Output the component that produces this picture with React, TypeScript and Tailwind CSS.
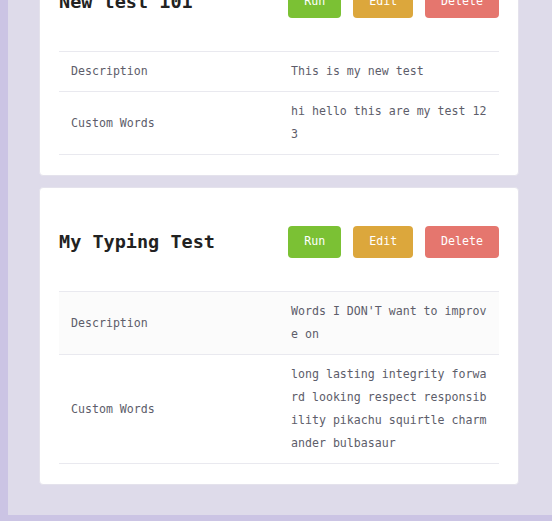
import React from "react";

type Row = { label: string; value: string; shade?: boolean };
type Test = { title: string; rows: Row[] };

const tests: Test[] = [
  {
    title: "New test 101",
    rows: [
      { label: "Description", value: "This is my new test" },
      { label: "Custom Words", value: "hi hello this are my test 123" },
    ],
  },
  {
    title: "My Typing Test",
    rows: [
      { label: "Description", value: "Words I DON'T want to improve on", shade: true },
      {
        label: "Custom Words",
        value:
          "long lasting integrity forward looking respect responsibility pikachu squirtle charmander bulbasaur",
      },
    ],
  },
];

const mono = { fontFamily: '"DejaVu Sans Mono", "Liberation Mono", monospace' };

function Card({ t }: { t: Test }) {
  return (
    <div className="bg-white rounded-[4px] border border-[#e4e2ec] px-[19px] pt-[20px] pb-[20px]">
      <div className="flex items-center justify-between h-[68px]">
        <h2 className="text-[18.5px] font-bold text-[#222222] leading-none">{t.title}</h2>
        <div className="flex gap-[12px]">
          <button className="h-[32px] px-[16px] rounded-[4px] bg-[#7bc134] text-white text-[11.6px]">Run</button>
          <button className="h-[32px] px-[16px] rounded-[4px] bg-[#dca73c] text-white text-[11.6px]">Edit</button>
          <button className="h-[32px] px-[16px] rounded-[4px] bg-[#e5766e] text-white text-[11.6px]">Delete</button>
        </div>
      </div>
      <div className="mt-[15px] border-t border-[#e9e9ef]">
        {t.rows.map((r) => (
          <div
            key={r.label}
            className={`grid grid-cols-2 border-b border-[#e9e9ef] ${r.shade ? "bg-[#fbfbfb]" : "bg-white"}`}
          >
            <div className="px-[12px] py-[8px] leading-[23px] text-[11.6px] text-[#5d5d6a] flex items-center">
              {r.label}
            </div>
            <div className="px-[12px] py-[8px] leading-[23px] text-[11.6px] text-[#5d5d6a] break-all">
              {r.value}
            </div>
          </div>
        ))}
      </div>
    </div>
  );
}

export default function App() {
  return (
    <div className="w-[552px] h-[521px] bg-[#cbc4e4] pl-[8px] pb-[6px]" style={mono}>
      <div className="h-full bg-[#dedbea] overflow-hidden">
        <div className="ml-[31px] w-[480px] mt-[-53px] flex flex-col gap-[11px]">
          {tests.map((t) => (
            <Card key={t.title} t={t} />
          ))}
        </div>
      </div>
    </div>
  );
}
